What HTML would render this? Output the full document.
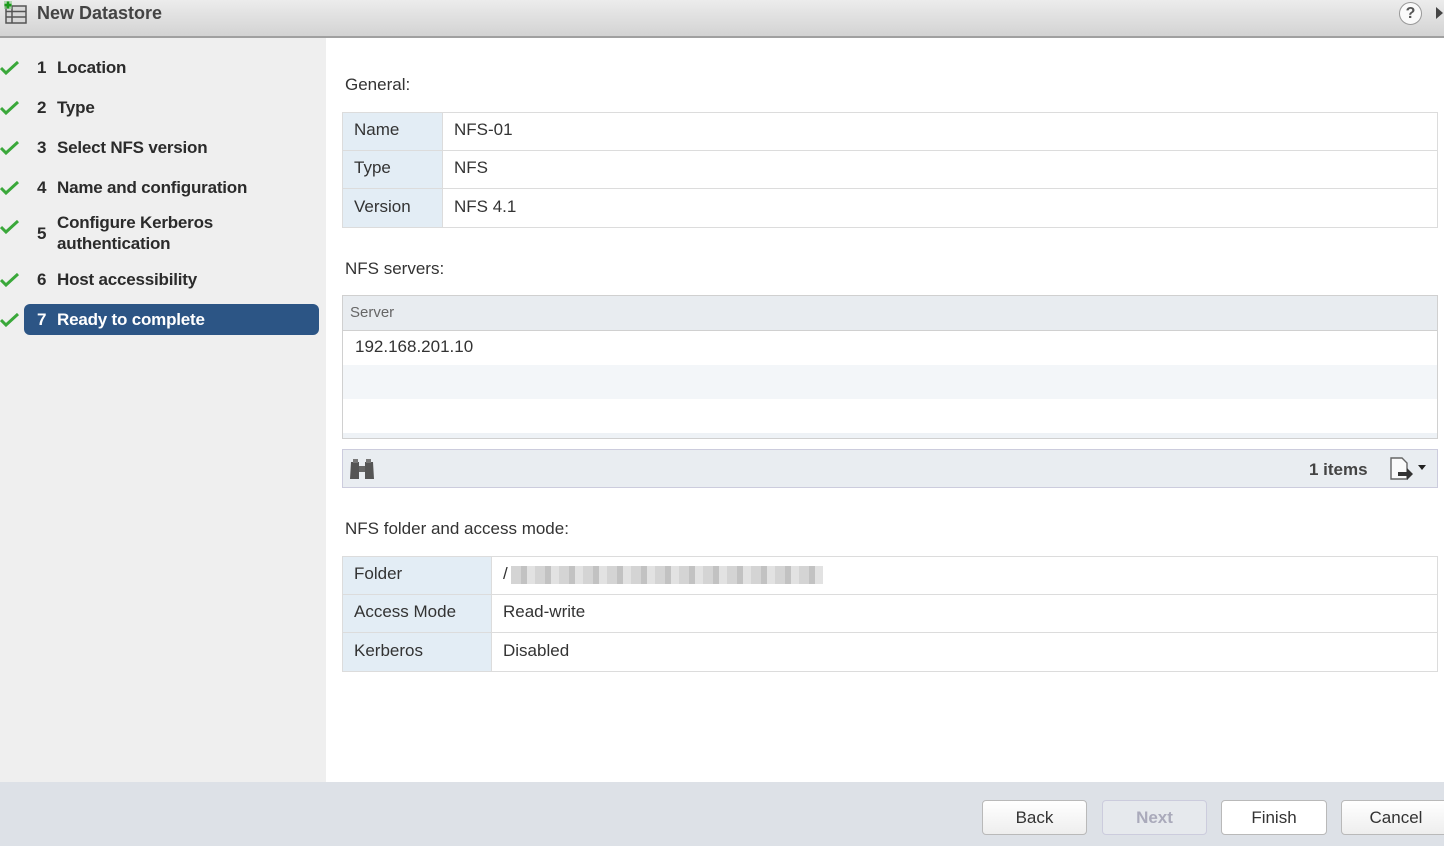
<!DOCTYPE html>
<html><head><style>
*{margin:0;padding:0;box-sizing:border-box}
body{width:1444px;height:846px;overflow:hidden;font-family:"Liberation Sans",Arial,sans-serif;background:#fff;position:relative;color:#333}
.a{position:absolute}
.hdr{left:0;top:0;width:1444px;height:38px;background:linear-gradient(#ececec,#d3d3d3);border-bottom:2px solid #a0a0a0}
.left{left:0;top:38px;width:326px;height:744px;background:#efefef}
.step{position:absolute;left:0;font-size:17px;font-weight:bold;color:#2b2b2b}
.ck{position:absolute;left:0;width:20px;height:14px}
.num{position:absolute;left:37px}
.lbl{position:absolute;left:57px;white-space:nowrap;letter-spacing:-0.2px}
.sec{font-size:17px;color:#333}
table{border-collapse:collapse;position:absolute;font-size:17px}
td{border:1px solid #dcdcdc;padding:0 11px 3px 11px;color:#333}
td.k{background:#e3edf5}
.foot{left:0;top:782px;width:1444px;height:64px;background:#dde1e7}
.btn{position:absolute;top:800px;height:35px;border:1px solid #b9b9b9;border-radius:4px;background:linear-gradient(#fff,#eee);font-size:17px;text-align:center;line-height:33px;color:#333}
</style></head><body>
<div class="a hdr"></div>
<svg class="a" style="left:3px;top:1px" width="26" height="24" viewBox="0 0 26 24"><rect x="3" y="5" width="20" height="17" fill="#d8d8d8" stroke="#555" stroke-width="1.5"/><line x1="3" y1="10.5" x2="23" y2="10.5" stroke="#555" stroke-width="1.5"/><line x1="3" y1="16" x2="23" y2="16" stroke="#555" stroke-width="1.5"/><line x1="9" y1="5" x2="9" y2="22" stroke="#555" stroke-width="1.5"/><rect x="1" y="0" width="8" height="8" fill="#8c8" opacity=".6"/><path d="M5 0.5v7M1.5 4h7" stroke="#1a9a1a" stroke-width="2.5"/></svg>
<div class="a" style="left:37px;top:3px;font-size:18px;font-weight:bold;color:#444">New Datastore</div>
<div class="a" style="left:1399px;top:2px;width:23px;height:23px;border-radius:50%;border:1px solid #999;background:#fafafa;text-align:center;font:bold 16px/21px 'Liberation Sans';color:#555">?</div>
<div class="a" style="left:1436px;top:7px;width:0;height:0;border-top:6px solid transparent;border-bottom:6px solid transparent;border-left:7px solid #444"></div>

<div class="a left"></div>
<svg width="0" height="0"><defs><path id="c" d="M1 7l5 5 12-11" stroke="#3aa83a" stroke-width="3" fill="none"/></defs></svg>
<div class="step" style="top:58px"><svg class="ck" style="top:3px"><use href="#c"/></svg><span class="num">1</span><span class="lbl">Location</span></div>
<div class="step" style="top:98px"><svg class="ck" style="top:3px"><use href="#c"/></svg><span class="num">2</span><span class="lbl">Type</span></div>
<div class="step" style="top:138px"><svg class="ck" style="top:3px"><use href="#c"/></svg><span class="num">3</span><span class="lbl">Select NFS version</span></div>
<div class="step" style="top:178px"><svg class="ck" style="top:3px"><use href="#c"/></svg><span class="num">4</span><span class="lbl">Name and configuration</span></div>
<div class="step" style="top:212px"><svg class="ck" style="top:8px"><use href="#c"/></svg><span class="num" style="top:12px">5</span><span class="lbl" style="line-height:21px">Configure Kerberos<br>authentication</span></div>
<div class="step" style="top:270px"><svg class="ck" style="top:3px"><use href="#c"/></svg><span class="num">6</span><span class="lbl">Host accessibility</span></div>
<div class="a" style="left:24px;top:304px;width:295px;height:31px;background:#2c5585;border-radius:6px"></div>
<div class="step" style="top:310px;color:#fff"><svg class="ck" style="top:3px"><use href="#c"/></svg><span class="num">7</span><span class="lbl">Ready to complete</span></div>

<div class="a sec" style="left:345px;top:75px">General:</div>
<table style="left:342px;top:112px;width:1096px">
<tr style="height:38px"><td class="k" style="width:100px">Name</td><td>NFS-01</td></tr>
<tr style="height:38px"><td class="k">Type</td><td>NFS</td></tr>
<tr style="height:39px"><td class="k">Version</td><td>NFS 4.1</td></tr>
</table>

<div class="a sec" style="left:345px;top:259px">NFS servers:</div>
<div class="a" style="left:342px;top:295px;width:1096px;height:144px;border:1px solid #d0d0d0;background:#fff">
<div style="height:35px;background:#e8ecf0;border-bottom:1px solid #d0d0d0;font-size:15px;color:#666;padding:8px 0 0 7px">Server</div>
<div style="height:34px;font-size:17px;padding:6px 0 0 12px">192.168.201.10</div>
<div style="height:34px;background:#f3f6f9"></div>
<div style="height:34px"></div>
<div style="height:5px;background:#eef2f6"></div>
</div>
<div class="a" style="left:342px;top:449px;width:1096px;height:39px;border:1px solid #ccd;background:#e9edf1"></div>
<svg class="a" style="left:349px;top:458px" width="26" height="21" viewBox="0 0 26 21"><path d="M2 4h8v17H1zM16 4h8l1 17h-9z" fill="#555"/><rect x="10" y="8" width="6" height="6" fill="#666"/><rect x="4" y="1" width="5" height="4" fill="#777"/><rect x="17" y="1" width="5" height="4" fill="#777"/></svg>
<div class="a" style="left:1309px;top:460px;font-size:17px;font-weight:bold;color:#444">1 items</div>
<svg class="a" style="left:1389px;top:456px" width="44" height="26" viewBox="0 0 44 26"><path d="M2 2h11l5 5v16H2z" fill="#fafafa" stroke="#666" stroke-width="1.4"/><path d="M9 16h9v-4l6 6-6 6v-4H9z" fill="#333"/><path d="M29 9h8l-4 5z" fill="#222"/></svg>

<div class="a sec" style="left:345px;top:519px">NFS folder and access mode:</div>
<table style="left:342px;top:556px;width:1096px">
<tr style="height:38px"><td class="k" style="width:149px">Folder</td><td><span>/</span><span style="display:inline-block;width:312px;height:18px;vertical-align:middle;margin-left:3px;background:repeating-linear-gradient(90deg,#d4d4d4 0 10px,#c2c2c2 10px 16px,#e2e2e2 16px 24px)"></span></td></tr>
<tr style="height:38px"><td class="k">Access Mode</td><td>Read-write</td></tr>
<tr style="height:39px"><td class="k">Kerberos</td><td>Disabled</td></tr>
</table>

<div class="a foot"></div>
<div class="btn" style="left:982px;width:105px">Back</div>
<div class="btn" style="left:1102px;width:105px;color:#aab;font-weight:bold;background:#e6e9ed;border-color:#ccd">Next</div>
<div class="btn" style="left:1221px;width:106px;background:#fff">Finish</div>
<div class="btn" style="left:1341px;width:110px">Cancel</div>
</body></html>
